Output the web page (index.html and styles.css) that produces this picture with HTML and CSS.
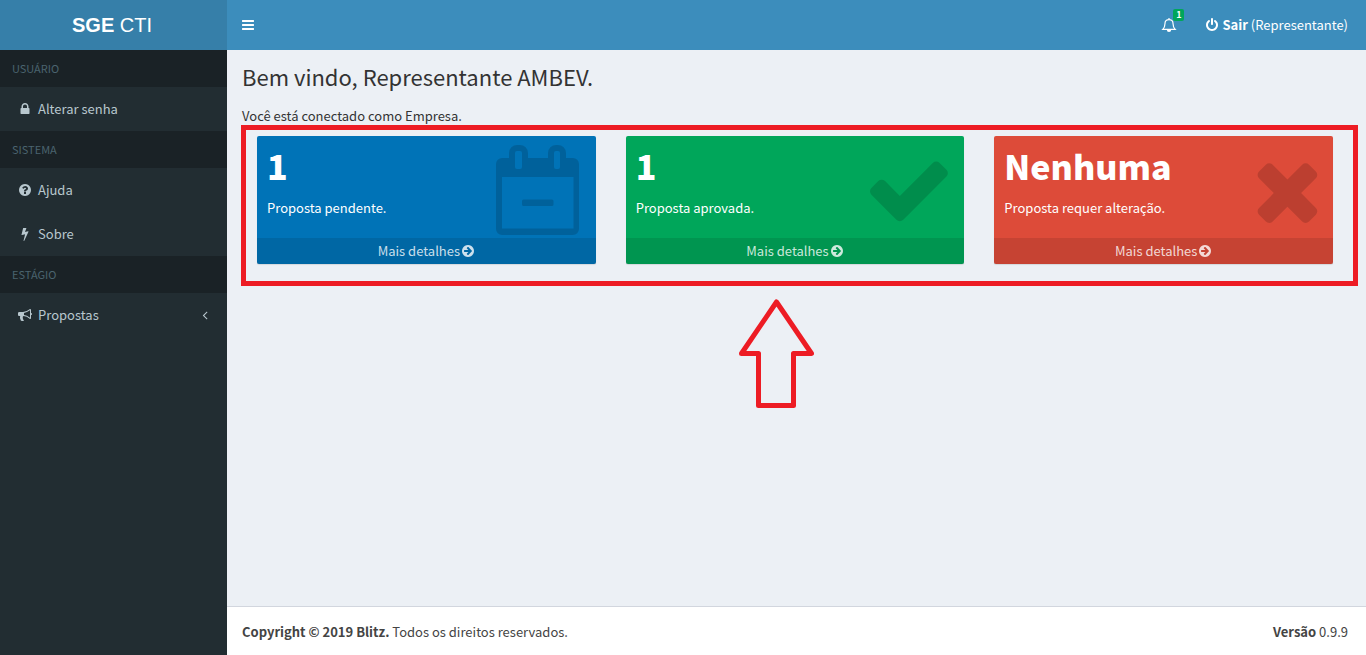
FILE: index.html
```html
<!DOCTYPE html>
<html lang="pt-BR">
<head>
<meta charset="utf-8">
<title>SGE CTI</title>
<link rel="stylesheet" href="styles.css">
</head>
<body>
<svg class="sprite" aria-hidden="true">
  <symbol id="arrow" viewBox="0 0 1792 1792"><path d="M1413 896q0-27-18-45l-91-91-362-362q-18-18-45-18t-45 18l-91 91q-18 18-18 45t18 45l189 189h-502q-26 0-45 19t-19 45v128q0 26 19 45t45 19h502l-189 189q-19 19-19 45t19 45l91 91q18 18 45 18t45-18l362-362 91-91q18-18 18-45zm251 0q0 209-103 385.500t-279.500 279.500-385.500 103-385.500-103-279.500-279.500-103-385.500 103-385.500 279.500-279.500 385.500-103 385.500 103 279.500 279.500 103 385.500z"/></symbol>
</svg>
<aside class="sidebar">
  <a class="logo" href="#"><b>SGE</b> CTI</a>
  <nav>
    <h2 class="menu-header">USUÁRIO</h2>
    <a class="menu-item" href="#"><svg class="icon" viewBox="0 0 1792 1792"><path d="M640 768h512v-192q0-106-75-181t-181-75-181 75-75 181v192zm832 96v576q0 40-28 68t-68 28h-960q-40 0-68-28t-28-68v-576q0-40 28-68t68-28h32v-192q0-184 132-316t316-132 316 132 132 316v192h32q40 0 68 28t28 68z"/></svg><span>Alterar senha</span></a>
    <h2 class="menu-header">SISTEMA</h2>
    <a class="menu-item" href="#"><svg class="icon" viewBox="0 0 1792 1792"><path d="M1024 1376v-192q0-14-9-23t-23-9h-192q-14 0-23 9t-9 23v192q0 14 9 23t23 9h192q14 0 23-9t9-23zm256-672q0-88-55.500-163t-138.500-116-170-41q-243 0-371 213-15 24 8 42l132 100q7 6 19 6 16 0 25-12 53-68 86-92 34-24 86-24 48 0 85.500 26t37.500 59q0 38-20 61t-68 45q-63 28-115.500 86.500t-52.500 125.500v36q0 14 9 23t23 9h192q14 0 23-9t9-23q0-19 21.500-49.500t54.500-49.500q32-18 49-28.500t46-35 44.500-48 28-60.500 12.500-81zm384 192q0 209-103 385.500t-279.500 279.500-385.500 103-385.500-103-279.500-279.500-103-385.500 103-385.500 279.500-279.500 385.500-103 385.500 103 279.500 279.500 103 385.500z"/></svg><span>Ajuda</span></a>
    <a class="menu-item" href="#"><svg class="icon" viewBox="0 0 1792 1792"><path d="M1333 566q18 20 7 44l-540 1157q-13 25-42 25-4 0-14-2-17-5-25.500-19t-4.500-30l197-808-406 101q-4 1-12 1-18 0-31-11-18-15-13-39l201-825q4-14 16-23t28-9h328q19 0 32 12.500t13 29.500q0 8-5 18l-171 463 396-98q8-2 12-2 19 0 34 15z"/></svg><span>Sobre</span></a>
    <h2 class="menu-header">ESTÁGIO</h2>
    <a class="menu-item" href="#"><svg class="icon" viewBox="0 0 1792 1792"><path d="M1664 640q53 0 90.500 37.500t37.500 90.500-37.500 90.500-90.500 37.500v384q0 52-38 90t-90 38q-417-347-812-380-58 19-91 66t-31 100.500 40 92.500q-20 33-23 65.500t6 58 33.500 55 48 50 61.500 50.500q-29 58-111.500 83t-168.500 11.500-132-55.500q-7-23-29.500-87.500t-32-94.500-23-89-15-101 3.500-98.500 22-110.500h-122q-66 0-113-47t-47-113v-192q0-66 47-113t113-47h480q435 0 896-384 52 0 90 38t38 90v384zm-128 604v-954q-394 302-768 343v270q377 42 768 341z"/></svg><span>Propostas</span><svg class="icon chevron" viewBox="0 0 1792 1792"><path d="M1203 544q0 13-10 23l-393 393 393 393q10 10 10 23t-10 23l-50 50q-10 10-23 10t-23-10l-466-466q-10-10-10-23t10-23l466-466q10-10 23-10t23 10l50 50q10 10 10 23z"/></svg></a>
  </nav>
</aside>
<div class="page">
  <header class="topbar">
    <button class="toggle" type="button" aria-label="Menu"><svg class="icon" viewBox="0 0 1792 1792"><path d="M1664 1344v128q0 26-19 45t-45 19h-1408q-26 0-45-19t-19-45v-128q0-26 19-45t45-19h1408q26 0 45 19t19 45zm0-512v128q0 26-19 45t-45 19h-1408q-26 0-45-19t-19-45v-128q0-26 19-45t45-19h1408q26 0 45 19t19 45zm0-512v128q0 26-19 45t-45 19h-1408q-26 0-45-19t-19-45v-128q0-26 19-45t45-19h1408q26 0 45 19t19 45z"/></svg></button>
    <a class="bell" href="#" aria-label="Notificações"><svg class="bell-icon" viewBox="0 0 16 16"><path class="line" d="M8 1V2.500M1.800 12.300C3.400 10.700 4 9 4 6.500C4 4 5.700 2.600 8 2.600S12 4 12 6.500C12 9 12.600 10.700 14.200 12.300Z"/><path d="M5.800 12.800H10.200A2.200 2.200 0 0 1 5.800 12.800Z"/></svg><span class="badge">1</span></a>
    <a class="logout" href="#"><svg class="icon" viewBox="0 0 1792 1792"><path d="M1664 896q0 156-61 298t-164 245-245 164-298 61-298-61-245-164-164-245-61-298q0-182 80.500-343t226.500-270q43-32 95.500-25t83.500 50q32 42 24.500 94.500t-49.500 84.500q-98 74-151.500 181t-53.500 228q0 104 40.500 198.500t109.500 163.500 163.500 109.500 198.500 40.500 198.500-40.500 163.500-109.500 109.500-163.500 40.500-198.500q0-121-53.500-228t-151.500-181q-42-32-49.500-84.500t24.500-94.500q31-43 84-50t95 25q146 109 226.500 270t80.500 343zm-640-768v640q0 52-38 90t-90 38-90-38-38-90v-640q0-52 38-90t90-38 90 38 38 90z"/></svg><span><b>Sair</b> (Representante)</span></a>
  </header>
  <main class="content">
    <h1>Bem vindo, Representante AMBEV.</h1>
    <p class="status">Você está conectado como Empresa.</p>
    <section class="highlight">
      <article class="card blue">
        <div class="card-body">
          <div><h3>1</h3><p>Proposta pendente.</p></div>
          <svg class="card-icon" viewBox="0 0 84 90"><path fill-rule="evenodd" d="M6 13H13V8a8 8 0 0 1 8-8H24a8 8 0 0 1 8 8V13H52V8a8 8 0 0 1 8-8H62a8 8 0 0 1 8 8V13H77a6 6 0 0 1 6 6V84a6 6 0 0 1-6 6H6a6 6 0 0 1-6-6V19a6 6 0 0 1 6-6ZM21 6a2 2 0 0 0-2 2V22a2 2 0 0 0 2 2H24a2 2 0 0 0 2-2V8a2 2 0 0 0-2-2ZM60 6a2 2 0 0 0-2 2V22a2 2 0 0 0 2 2H62a2 2 0 0 0 2-2V8a2 2 0 0 0-2-2ZM6 32V83.500H77.500V32ZM27.500 54.500H56a1.500 1.500 0 0 1 1.500 1.500V59.500a1.500 1.500 0 0 1-1.500 1.500H27.500a1.500 1.500 0 0 1-1.500-1.500V56a1.500 1.500 0 0 1 1.500-1.500Z"/></svg>
        </div>
        <a class="card-footer" href="#">Mais detalhes<svg class="icon"><use href="#arrow"/></svg></a>
      </article>
      <article class="card green">
        <div class="card-body">
          <div><h3>1</h3><p>Proposta aprovada.</p></div>
          <svg class="card-icon" viewBox="121 5 1550 1792"><path d="M1671 566q0 40-28 68l-724 724-136 136q-28 28-68 28t-68-28l-136-136-362-362q-28-28-28-68t28-68l136-136q28-28 68-28t68 28l294 295 656-657q28-28 68-28t68 28l136 136q28 28 28 68z"/></svg>
        </div>
        <a class="card-footer" href="#">Mais detalhes<svg class="icon"><use href="#arrow"/></svg></a>
      </article>
      <article class="card red">
        <div class="card-body">
          <div><h3>Nenhuma</h3><p>Proposta requer alteração.</p></div>
          <svg class="card-icon" viewBox="290 2 1188 1792"><path d="M1490 1322q0 40-28 68l-136 136q-28 28-68 28t-68-28l-294-294-294 294q-28 28-68 28t-68-28l-136-136q-28-28-28-68t28-68l294-294-294-294q-28-28-28-68t28-68l136-136q28-28 68-28t68 28l294 294 294-294q28-28 68-28t68 28l136 136q28 28 28 68t-28 68l-294 294 294 294q28 28 28 68z"/></svg>
        </div>
        <a class="card-footer" href="#">Mais detalhes<svg class="icon"><use href="#arrow"/></svg></a>
      </article>
    </section>
    <svg class="pointer" viewBox="0 0 75 109"><path d="M37.500 3L72.500 54.500H54.500V106.500H19.500V54.500H2.500Z"/></svg>
  </main>
  <footer class="footer">
    <span><b>Copyright © 2019 Blitz.</b> Todos os direitos reservados.</span>
    <span><b>Versão</b> 0.9.9</span>
  </footer>
</div>
</body>
</html>
```
FILE: styles.css
```css
* { box-sizing: border-box; }

body {
  margin: 0;
  min-height: 100vh;
  display: flex;
  font: 13px/20px "Noto Sans CJK JP", "Noto Sans", sans-serif;
  color: #333;
  background: #ecf0f5;
}

a { color: inherit; text-decoration: none; }
h1, h2, h3, p { margin: 0; }

.sprite { position: absolute; width: 0; height: 0; }
.icon { width: 14px; height: 14px; flex: none; fill: currentColor; }

.sidebar { width: 227px; flex: none; background: #222d32; }

.logo {
  display: block;
  height: 50px;
  padding-right: 3px;
  font: 20px/50px "Liberation Sans", Arial, sans-serif;
  text-align: center;
  color: #fff;
  background: #367fa9;
}

.menu-header {
  padding: 10px 12px;
  font-size: 11px;
  line-height: 17px;
  font-weight: 400;
  color: #4b646f;
  background: #1a2226;
}

.menu-item {
  display: flex;
  align-items: center;
  gap: 6px;
  padding: 12px 15px 12px 18px;
  color: #b8c7ce;
}

.chevron { margin-left: auto; }

.page { flex: 1; min-width: 0; display: flex; flex-direction: column; }

.topbar {
  height: 50px;
  display: flex;
  align-items: center;
  padding: 0 18px 0 14px;
  color: #fff;
  background: #3c8dbc;
}

.toggle {
  display: flex;
  margin-right: auto;
  padding: 0;
  border: 0;
  color: inherit;
  background: none;
}

.bell { position: relative; display: flex; margin-right: 28px; }
.bell-icon { width: 16px; height: 16px; fill: currentColor; }
.line { fill: none; stroke: currentColor; stroke-width: 1.2; }

.badge {
  position: absolute;
  top: -8px;
  right: -7px;
  padding: 0 3px;
  border-radius: 2px;
  font-size: 9px;
  line-height: 12px;
  font-weight: 700;
  background: #00a65a;
}

.logout { display: flex; align-items: center; gap: 3px; }

.content { flex: 1; padding: 15px 8px 15px 14px; }

h1 { padding-left: 1px; font-size: 22px; line-height: 22px; font-weight: 400; }
.status { padding: 19px 0 0 1px; line-height: 19px; }

.highlight {
  display: grid;
  grid-template-columns: repeat(3, 1fr);
  gap: 30px;
  padding: 6px 20px 17px 11px;
  border: 5px solid #ed1c24;
}

.card { border-radius: 2px; color: #fff; box-shadow: 0 1px 1px rgba(0, 0, 0, 0.1); }
.blue { background: #0073b7; }
.green { background: #00a65a; }
.red { background: #dd4b39; }

.card-body {
  height: 102px;
  display: flex;
  justify-content: space-between;
  padding: 9px 16px 0 10px;
}

.card h3 { font-size: 34px; line-height: 42px; font-weight: 900; }
.card p { padding-top: 11px; }
.card-icon { height: 90px; fill: rgba(0, 0, 0, 0.15); overflow: visible; }

.card-footer {
  display: flex;
  align-items: center;
  justify-content: center;
  gap: 1px;
  padding: 3px 0;
  color: rgba(255, 255, 255, 0.8);
  background: rgba(0, 0, 0, 0.1);
}

.pointer {
  display: block;
  width: 75px;
  margin: 13px 0 0 498px;
  fill: none;
  stroke: #ed1c24;
  stroke-width: 5;
  stroke-linejoin: round;
}

.footer {
  display: flex;
  justify-content: space-between;
  padding: 15px 18px 13px 15px;
  border-top: 1px solid #d2d6de;
  color: #444;
  background: #fff;
}
```
